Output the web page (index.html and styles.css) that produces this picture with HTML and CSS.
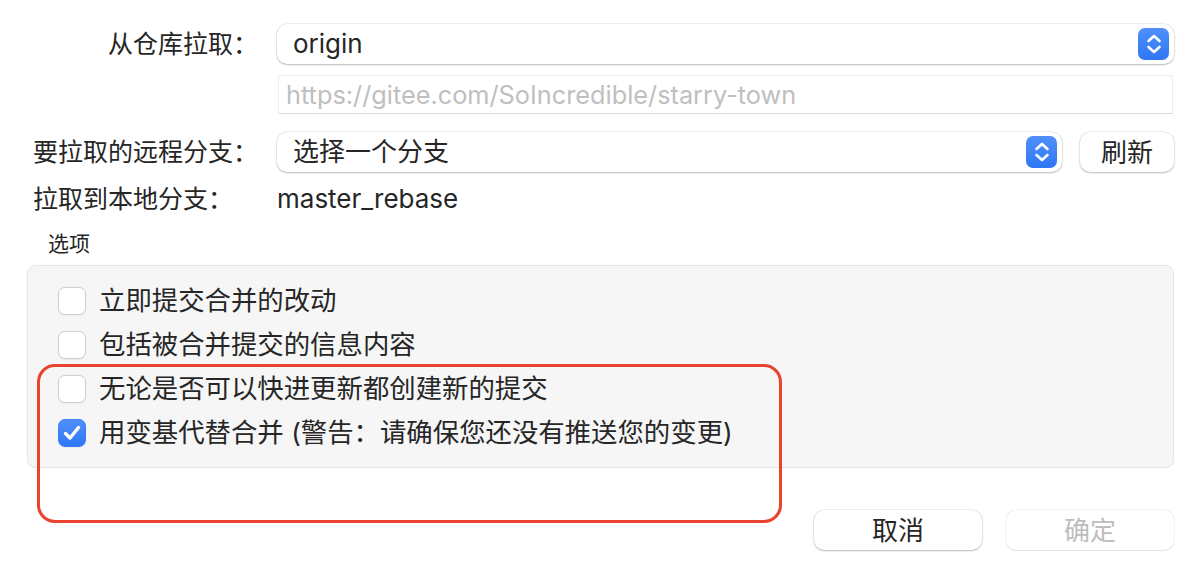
FILE: index.html
```html
<!DOCTYPE html>
<html lang="zh-CN">
<head>
<meta charset="utf-8">
<title>拉取</title>
<link rel="stylesheet" href="styles.css">
</head>
<body>
<div class="dialog">
  <div class="form">
    <div class="lbl lbl-right">从仓库拉取：</div>
    <div class="popup">
      <span class="popup-text">origin</span>
      <span class="stepper"><svg width="18" height="22" viewBox="0 0 18 22"><path d="M3.5 8 L9 3 L14.5 8 M3.5 14 L9 19 L14.5 14" fill="none" stroke="#fff" stroke-width="2.6" stroke-linecap="round" stroke-linejoin="round"/></svg></span>
    </div>
    <div class="spacer"></div>
    <div class="urlfield">https://gitee.com/SoIncredible/starry-town</div>
    <div class="lbl lbl-row3">要拉取的远程分支：</div>
    <div class="branch-row">
      <div class="popup popup-grow">
        <span class="popup-text">选择一个分支</span>
        <span class="stepper"><svg width="18" height="22" viewBox="0 0 18 22"><path d="M3.5 8 L9 3 L14.5 8 M3.5 14 L9 19 L14.5 14" fill="none" stroke="#fff" stroke-width="2.6" stroke-linecap="round" stroke-linejoin="round"/></svg></span>
      </div>
      <button class="btn btn-refresh">刷新</button>
    </div>
    <div class="lbl lbl-row4">拉取到本地分支：</div>
    <div class="value">master_rebase</div>
  </div>

  <div class="group-title">选项</div>
  <div class="options">
    <div class="opt"><span class="cb"></span><span class="opt-text">立即提交合并的改动</span></div>
    <div class="opt"><span class="cb"></span><span class="opt-text">包括被合并提交的信息内容</span></div>
    <div class="opt"><span class="cb"></span><span class="opt-text">无论是否可以快进更新都创建新的提交</span></div>
    <div class="opt"><span class="cb cb-on"><svg width="20" height="18" viewBox="0 0 20 18"><path d="M3.5 9.5 L8 14 L16.5 3.5" fill="none" stroke="#fff" stroke-width="3.4" stroke-linecap="round" stroke-linejoin="round"/></svg></span><span class="opt-text">用变基代替合并 (警告：请确保您还没有推送您的变更)</span></div>
  </div>

  <div class="footer">
    <button class="btn btn-foot">取消</button>
    <button class="btn btn-foot btn-disabled">确定</button>
  </div>

  <div class="highlight"></div>
</div>
</body>
</html>
```

FILE: styles.css
```css
* { box-sizing: border-box; }
html, body { margin: 0; padding: 0; background: #ffffff; }
body {
  font-family: Inter, "Noto Sans CJK SC", sans-serif;
  color: #262626;
  font-size: 26px;
}
.dialog {
  position: relative;
  width: 1194px;
  height: 572px;
  padding: 24px 20px 0 27px;
}
.form {
  display: grid;
  grid-template-columns: 250px 1fr;
  padding-left: 6px;
  align-items: center;
}
.lbl {
  font-size: 25px;
  line-height: 40px;
  white-space: nowrap;
}
.lbl-right { text-align: right; margin-right: 25px; }
.lbl-row3 { margin-top: 18px; }
.lbl-row4 { margin-top: 8px; line-height: 38px; }
.popup {
  height: 40px;
  background: #fff;
  border-radius: 10px;
  box-shadow: 0 0 0 0.5px rgba(0,0,0,0.12), 0 1px 2px rgba(0,0,0,0.22);
  display: flex;
  align-items: center;
  justify-content: space-between;
  padding: 0 5px 0 16px;
  margin-left: -6px;
}
.popup-text { line-height: 40px; }
.stepper {
  width: 31px;
  height: 32px;
  border-radius: 7px;
  background: linear-gradient(#4f90fa, #2f76f5);
  display: flex;
  align-items: center;
  justify-content: center;
}
.spacer { height: 1px; }
.urlfield {
  margin-top: 11px;
  margin-left: -5px;
  margin-right: 1px;
  height: 39px;
  border: 1px solid #ededed;
  border-bottom-color: #dcdcdc;
  padding-left: 7px;
  line-height: 37px;
  color: #bfbfbf;
  font-size: 25.3px;
}
.branch-row {
  margin-top: 18px;
  display: flex;
  gap: 18px;
  align-items: center;
}
.popup-grow { flex: 1; }
.btn {
  font-family: Inter, "Noto Sans CJK SC", sans-serif;
  font-size: 26px;
  color: #262626;
  background: #fff;
  border: none;
  border-radius: 10px;
  box-shadow: 0 0 0 0.5px rgba(0,0,0,0.12), 0 1px 2px rgba(0,0,0,0.22);
  height: 40px;
  padding: 0 0 4px 0;
}
.btn-refresh { width: 94px; }
.value {
  margin-top: 8px;
  line-height: 38px;
  margin-left: -6px;
}
.group-title {
  font-size: 21px;
  line-height: 30px;
  margin: 11px 0 0 21px;
}
.options {
  margin-top: 6px;
  background: #f6f6f6;
  border: 1px solid #e6e6e6;
  border-radius: 8px;
  padding: 13px 0 13px 30px;
  height: 203px;
}
.opt {
  height: 44px;
  display: flex;
  align-items: center;
  gap: 13px;
}
.opt-text { padding-bottom: 6px; font-size: 26.4px; }
.cb {
  width: 28px;
  height: 28px;
  border-radius: 7px;
  background: #fff;
  border: 1px solid #cfcfcf;
  box-shadow: 0 0.5px 1px rgba(0,0,0,0.05);
  display: flex;
  align-items: center;
  justify-content: center;
  flex: none;
}
.cb-on {
  background: linear-gradient(#4f90fa, #2f76f5);
  border-color: #3a7ef6;
}
.footer {
  display: flex;
  justify-content: flex-end;
  gap: 24px;
  margin-top: 42px;
}
.btn-foot { width: 168px; }
.btn-disabled {
  color: #bdbdbd;
  box-shadow: 0 0 0 0.5px rgba(0,0,0,0.08), 0 0.5px 1px rgba(0,0,0,0.08);
}
.highlight {
  position: absolute;
  left: 37px;
  top: 364px;
  width: 745px;
  height: 159px;
  border: 3px solid #e8432e;
  border-radius: 18px;
  pointer-events: none;
}
```
